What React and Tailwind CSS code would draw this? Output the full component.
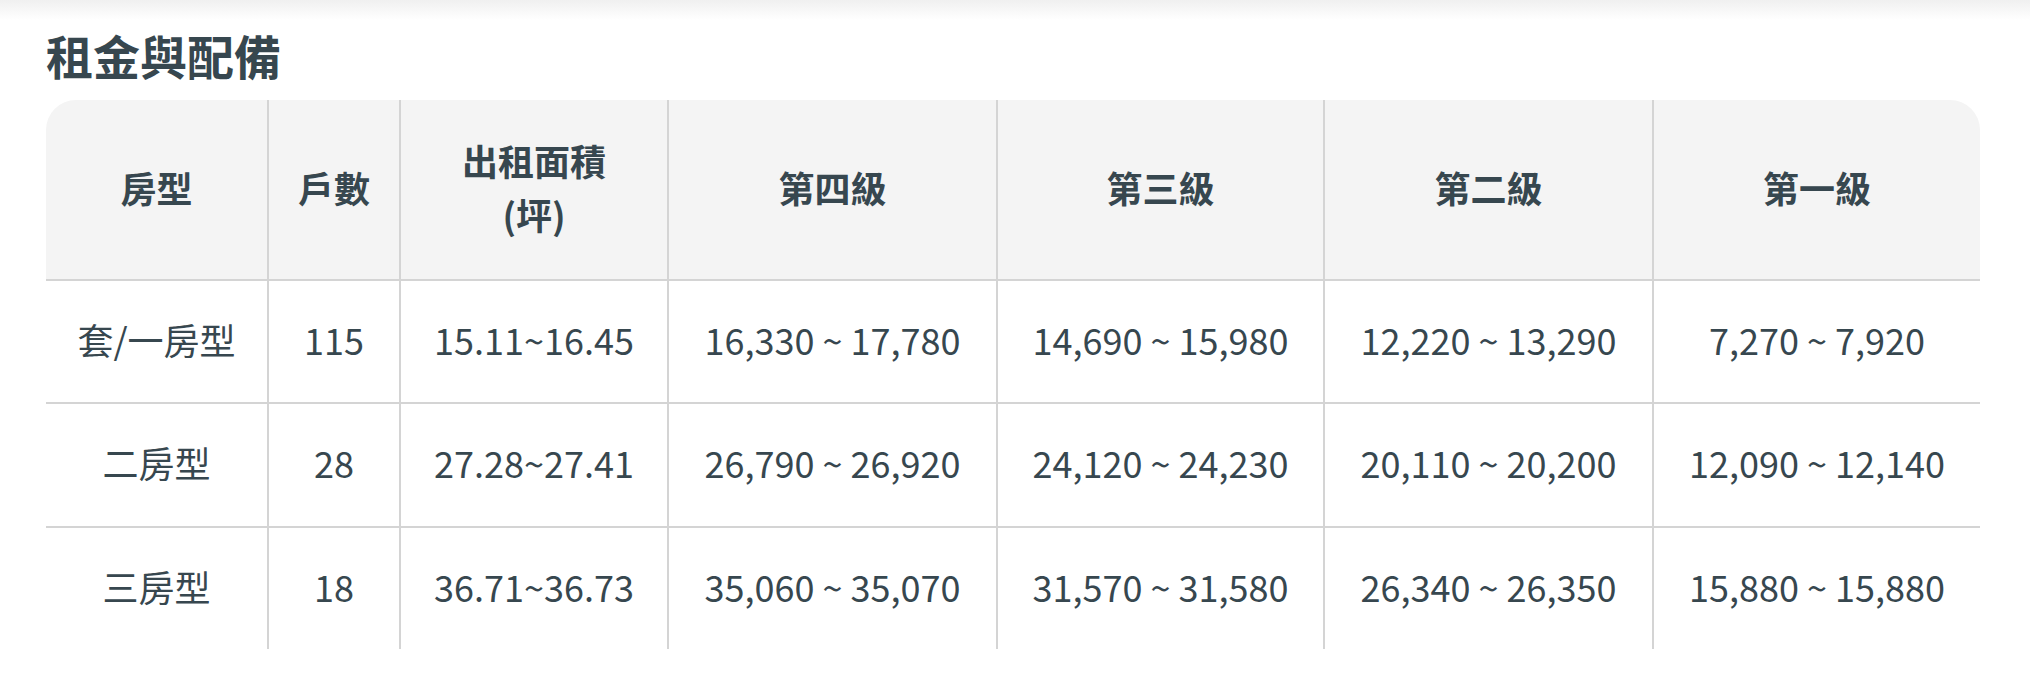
import React from "react";

const headers = [["房型"], ["戶數"], ["出租面積", "(坪)"], ["第四級"], ["第三級"], ["第二級"], ["第一級"]];

const rows = [
  { h: "h-[123px] border-b-2", cells: ["套/一房型", "115", "15.11~16.45", "16,330 ~ 17,780", "14,690 ~ 15,980", "12,220 ~ 13,290", "7,270 ~ 7,920"] },
  { h: "h-[124px] border-b-2", cells: ["二房型", "28", "27.28~27.41", "26,790 ~ 26,920", "24,120 ~ 24,230", "20,110 ~ 20,200", "12,090 ~ 12,140"] },
  { h: "h-[121px]", cells: ["三房型", "18", "36.71~36.73", "35,060 ~ 35,070", "31,570 ~ 31,580", "26,340 ~ 26,350", "15,880 ~ 15,880"] },
];

export default function App() {
  return (
    <div
      className="min-h-[682px] bg-white text-[#37474f]"
      style={{ fontFamily: '"Noto Sans CJK TC", "Noto Sans", sans-serif' }}
    >
      <div className="h-[20px] bg-gradient-to-b from-[#f0f0f0] to-white" />
      <div className="pl-[46px]">
        <h2 className="mt-[7px] text-[47px] leading-[56px] font-bold">租金與配備</h2>
        <div className="mt-[17px] w-[1934px] rounded-t-[30px] overflow-hidden">
          <div className="grid grid-cols-[221px_132px_268px_329px_327px_329px_328px]">
            {headers.map((lines, i) => (
              <div
                key={i}
                className={`h-[181px] pb-[6px] bg-[#f4f4f4] border-b-2 border-[#d4d4d4] flex flex-col items-center justify-center text-[36px] leading-[54px] font-bold text-center ${i > 0 ? "border-l-2" : ""}`}
              >
                {lines.map((l, j) => (
                  <span key={j}>{l}</span>
                ))}
              </div>
            ))}
            {rows.map((r, ri) =>
              r.cells.map((c, i) => (
                <div
                  key={ri + "-" + i}
                  className={`${r.h} pb-[6px] border-[#d4d4d4] flex items-center justify-center text-[36px] leading-[54px] text-center whitespace-nowrap ${i > 0 ? "border-l-2" : ""}`}
                >
                  {c}
                </div>
              ))
            )}
          </div>
        </div>
      </div>
    </div>
  );
}
